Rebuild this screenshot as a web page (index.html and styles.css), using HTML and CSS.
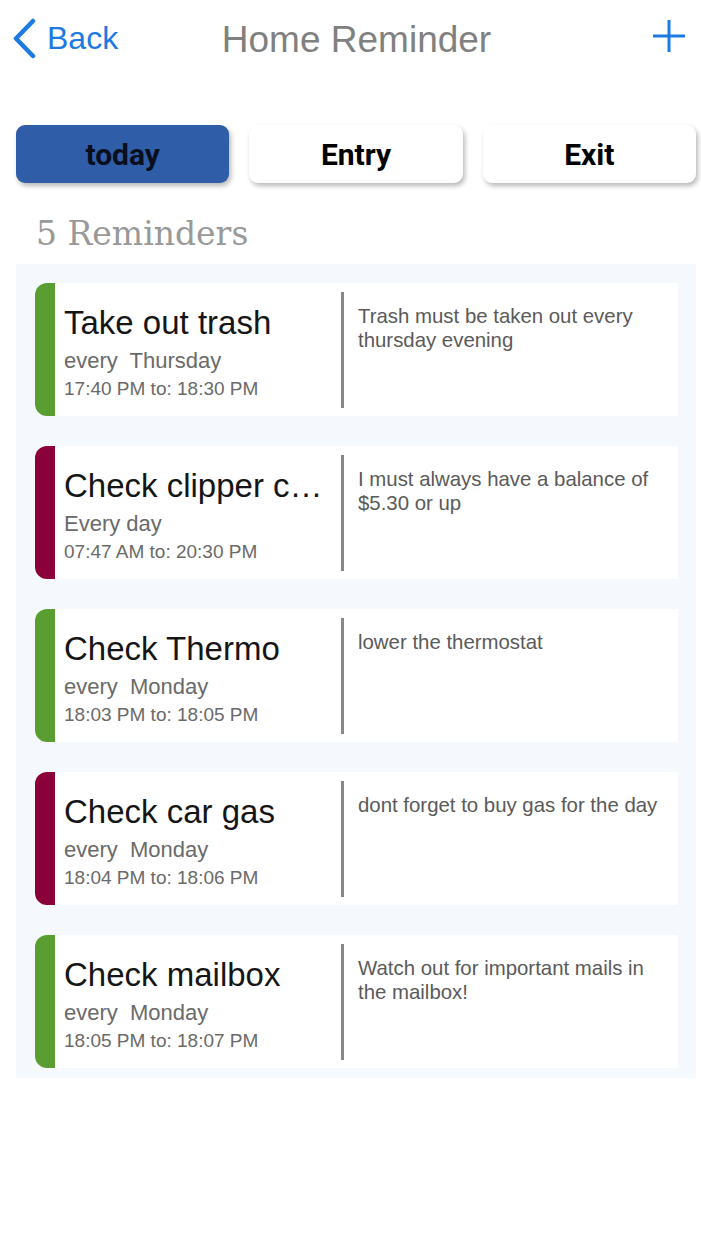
FILE: index.html
```html
<!DOCTYPE html>
<html lang="en">
<head>
<meta charset="utf-8">
<title>Home Reminder</title>
<link rel="stylesheet" href="styles.css">
</head>
<body>
<div class="app">
  <header class="nav">
    <a class="nav-back" href="#">
      <svg class="chevron" width="26" height="42" viewBox="0 0 26 42"><polyline points="20,3 3,20.5 20,38" fill="none" stroke="#1d7ae2" stroke-width="4.5" stroke-linecap="round" stroke-linejoin="round"/></svg>
      <span>Back</span>
    </a>
    <h1 class="nav-title">Home Reminder</h1>
    <div class="nav-right">
      <svg class="plus" width="34" height="34" viewBox="0 0 34 34"><path d="M17 1V33M1 17H33" stroke="#1d7ae2" stroke-width="3" fill="none"/></svg>
    </div>
  </header>

  <nav class="tabs">
    <button class="tab tab-active">today</button>
    <button class="tab">Entry</button>
    <button class="tab">Exit</button>
  </nav>

  <h2 class="count">5 Reminders</h2>

  <section class="list">
    <article class="card">
      <div class="bar bar-green"></div>
      <div class="main">
        <div class="title">Take out trash</div>
        <div class="repeat">every&nbsp; Thursday</div>
        <div class="time">17:40 PM to: 18:30 PM</div>
      </div>
      <div class="divider"></div>
      <div class="desc">Trash must be taken out every thursday evening</div>
    </article>
    <article class="card">
      <div class="bar bar-red"></div>
      <div class="main">
        <div class="title">Check clipper card</div>
        <div class="repeat">Every day</div>
        <div class="time">07:47 AM to: 20:30 PM</div>
      </div>
      <div class="divider"></div>
      <div class="desc">I must always have a balance of $5.30 or up</div>
    </article>
    <article class="card">
      <div class="bar bar-green"></div>
      <div class="main">
        <div class="title">Check Thermo</div>
        <div class="repeat">every&nbsp; Monday</div>
        <div class="time">18:03 PM to: 18:05 PM</div>
      </div>
      <div class="divider"></div>
      <div class="desc">lower the thermostat</div>
    </article>
    <article class="card">
      <div class="bar bar-red"></div>
      <div class="main">
        <div class="title">Check car gas</div>
        <div class="repeat">every&nbsp; Monday</div>
        <div class="time">18:04 PM to: 18:06 PM</div>
      </div>
      <div class="divider"></div>
      <div class="desc">dont forget to buy gas for the day</div>
    </article>
    <article class="card">
      <div class="bar bar-green"></div>
      <div class="main">
        <div class="title">Check mailbox</div>
        <div class="repeat">every&nbsp; Monday</div>
        <div class="time">18:05 PM to: 18:07 PM</div>
      </div>
      <div class="divider"></div>
      <div class="desc">Watch out for important mails in the mailbox!</div>
    </article>
  </section>
</div>
</body>
</html>
```

FILE: styles.css
```css
* { box-sizing: border-box; }

html, body {
  margin: 0;
  padding: 0;
  background: #ffffff;
}

body {
  width: 701px;
  font-family: "Liberation Sans", Arial, sans-serif;
}

.app {
  width: 701px;
}

.nav {
  height: 76px;
  display: grid;
  grid-template-columns: 1fr auto 1fr;
  align-items: center;
}

.nav-back {
  display: flex;
  align-items: center;
  padding-left: 13px;
  gap: 8px;
  color: #1d7ae2;
  text-decoration: none;
  font-size: 32px;
}

.chevron { display: block; margin-top: 1px; }

.nav-title {
  margin: 0;
  padding-left: 12px;
  font-weight: normal;
  font-size: 37px;
  color: #808080;
  padding-top: 3px;
}

.nav-right {
  display: flex;
  justify-content: flex-end;
  padding-right: 15px;
}

.plus { display: block; margin-top: -4px; }

.tabs {
  margin-top: 49px;
  padding: 0 5px 0 16px;
  display: grid;
  grid-template-columns: repeat(3, 1fr);
  gap: 20px;
}

.tab {
  height: 58px;
  border: none;
  border-radius: 9px;
  background: #ffffff;
  box-shadow: 2px 3px 5px rgba(0, 0, 0, 0.28);
  font-family: Roboto, "Liberation Sans", sans-serif;
  font-weight: 700;
  font-size: 30px;
  color: #000;
  padding: 0;
}

.tab-active {
  background: #2f5da8;
  color: #0a0f1e;
}

.count {
  margin: 31px 0 10px 0;
  padding-left: 36px;
  font-family: "DejaVu Serif", serif;
  font-weight: normal;
  font-size: 33px;
  line-height: 40px;
  color: #999999;
}

.list {
  margin: 0 5px 0 16px;
  padding: 19px 18px 10px 19px;
  background: #f5f9fe;
  display: flex;
  flex-direction: column;
  gap: 30px;
}

.card {
  height: 133px;
  display: flex;
  background: #ffffff;
  border-radius: 12px 0 0 12px;
  overflow: hidden;
}

.bar {
  width: 20px;
  flex: none;
}

.bar-green { background: #5a9e31; }
.bar-red { background: #8b0039; }

.main {
  width: 286px;
  flex: none;
  padding: 19px 14px 0 9px;
  white-space: nowrap;
}

.title {
  font-size: 33px;
  line-height: 42px;
  color: #151515;
  overflow: hidden;
  text-overflow: ellipsis;
}

.repeat {
  font-size: 22px;
  line-height: 34px;
  color: #6a6a6a;
}

.time {
  font-size: 19px;
  line-height: 22px;
  color: #6a6a6a;
}

.divider {
  width: 3px;
  flex: none;
  margin: 9px 0 8px;
  background: #888888;
}

.desc {
  flex: 1;
  padding: 21px 10px 0 14px;
  font-size: 20.4px;
  line-height: 24px;
  color: #5a5a5a;
}
```
